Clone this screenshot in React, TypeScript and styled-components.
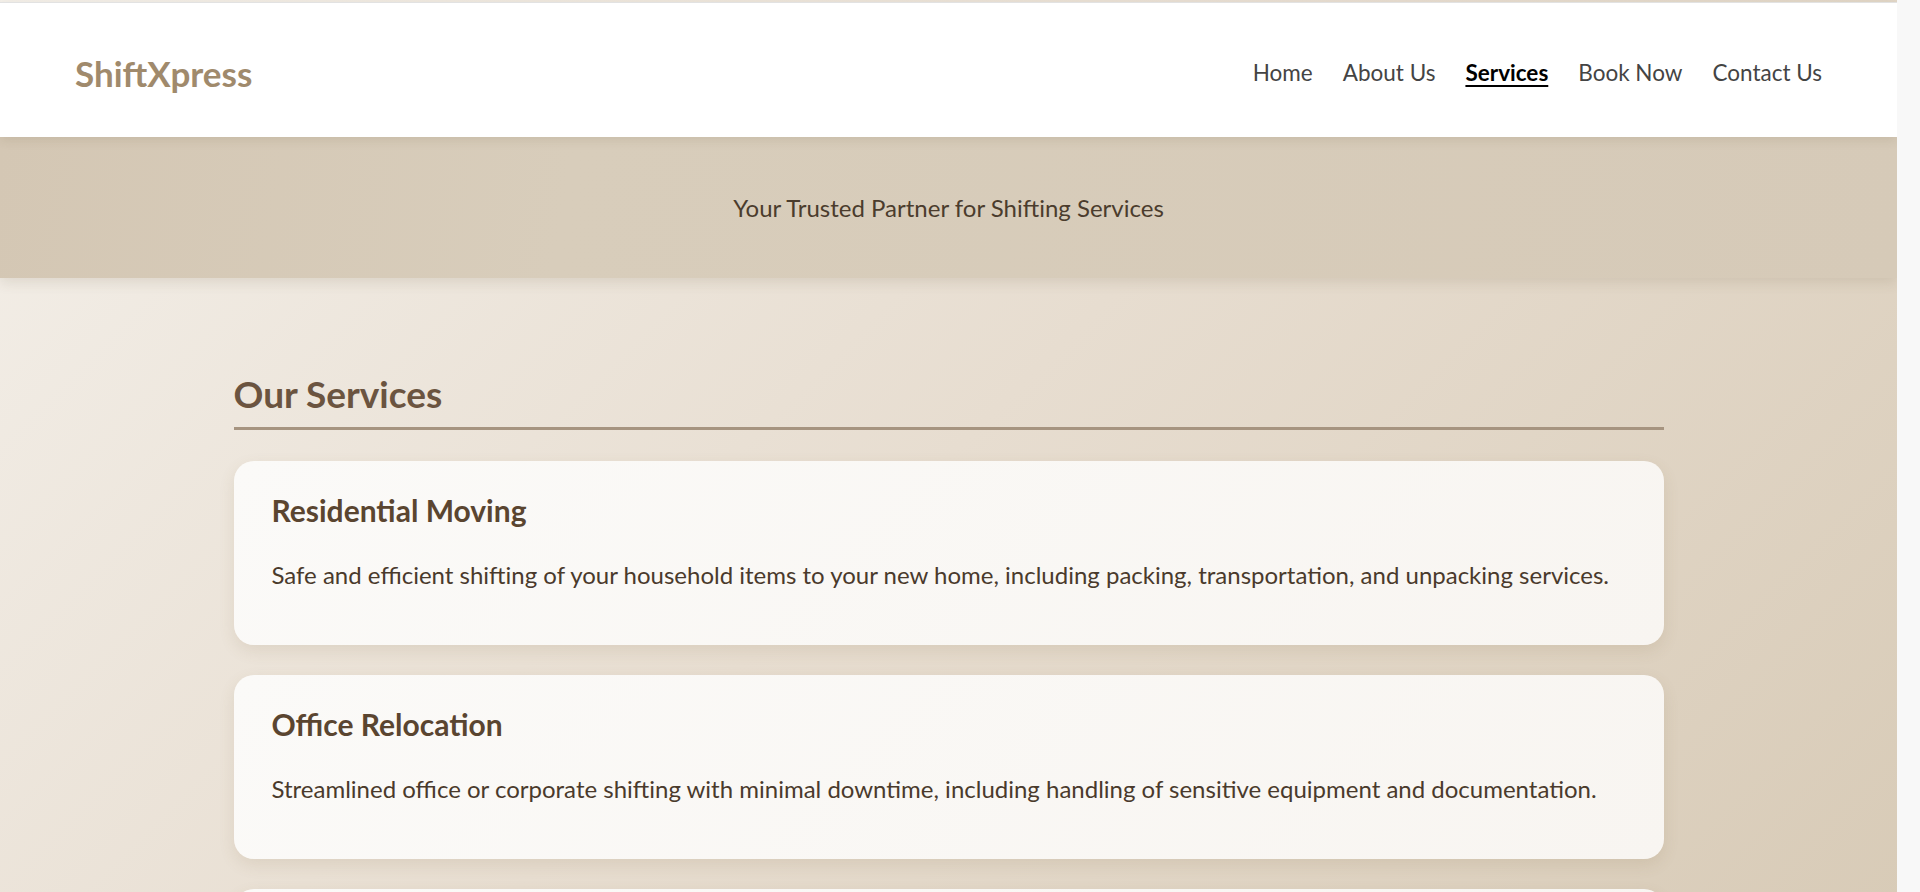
import styled, { createGlobalStyle } from "styled-components";

const GlobalStyle = createGlobalStyle`
  html {
    background: #f8f8f8;
  }
  body {
    margin: 0 23px 0 0;
    padding: 0;
    font-family: Lato, "Open Sans", sans-serif;
    background: linear-gradient(135deg, #f4f0ea 0%, #e7ddd0 50%, #d8cbb7 100%) fixed;
    color: #4a3b2c;
  }
`;

const Header = styled.header`
  position: relative;
  z-index: 2;
  display: flex;
  justify-content: space-between;
  align-items: center;
  box-sizing: border-box;
  height: 135px;
  margin-top: 2px;
  padding: 5px 75px 0;
  background: #ffffff;
  border-top: 1px solid #e2e2e2;
  box-shadow: 0 3px 10px rgba(90, 70, 40, 0.12);
`;

const Logo = styled.div`
  font-size: 35px;
  font-weight: 700;
  color: #a08a6c;
`;

const NavList = styled.ul`
  display: flex;
  gap: 30px;
  margin: 0;
  padding: 0;
  list-style: none;
`;

const NavLink = styled.a<{ $active?: boolean }>`
  font-size: 22.5px;
  text-decoration: ${({ $active }) => ($active ? "underline" : "none")};
  text-underline-offset: 4px;
  text-decoration-thickness: 2px;
  font-weight: ${({ $active }) => ($active ? 700 : 400)};
  color: ${({ $active }) => ($active ? "#000000" : "#444444")};
  cursor: pointer;
`;

const Hero = styled.section`
  position: relative;
  z-index: 1;
  display: flex;
  justify-content: center;
  align-items: center;
  height: 141px;
  background: linear-gradient(100deg, #d4c7b4 0%, #d8cdbb 30%, #d6cab8 100%);
  box-shadow: 0 5px 12px rgba(90, 70, 40, 0.12);
`;

const Tagline = styled.p`
  margin: 0;
  font-size: 24px;
  color: #4b3c2d;
`;

const Main = styled.main`
  padding: 93px 0 60px;
`;

const Container = styled.div`
  width: 1430px;
  max-width: 90%;
  margin: 0 auto;
`;

const SectionTitle = styled.h2`
  margin: 0 0 31px;
  padding-bottom: 10px;
  font-size: 37px;
  line-height: 46px;
  font-weight: 700;
  color: #6b5440;
  border-bottom: 3px solid #a69480;
`;

const Card = styled.article`
  margin-bottom: 30px;
  padding: 32px 34px 32px 38px;
  border-radius: 20px;
  background: linear-gradient(135deg, #fbfaf8 0%, #f8f5f1 100%);
  box-shadow: 0 6px 16px rgba(120, 95, 60, 0.12);
`;

const CardTitle = styled.h3`
  margin: 0 0 30px;
  font-size: 30px;
  line-height: 34px;
  font-weight: 700;
  color: #5a4530;
`;

const CardText = styled.p`
  margin: 0 0 21px;
  font-size: 24px;
  line-height: 35px;
  color: #4a3a2c;
`;

const links = ["Home", "About Us", "Services", "Book Now", "Contact Us"];

const services = [
  {
    title: "Residential Moving",
    text: "Safe and efficient shifting of your household items to your new home, including packing, transportation, and unpacking services.",
  },
  {
    title: "Office Relocation",
    text: "Streamlined office or corporate shifting with minimal downtime, including handling of sensitive equipment and documentation.",
  },
  {
    title: "Vehicle Transportation",
    text: "Secure transport of cars and bikes to your destination with enclosed carriers and full insurance coverage.",
  },
  {
    title: "Storage Solutions",
    text: "Clean and secure short-term or long-term storage facilities for your belongings during the move.",
  },
];

export default function App() {
  return (
    <>
      <GlobalStyle />
      <Header>
        <Logo>ShiftXpress</Logo>
        <nav>
          <NavList>
            {links.map((l) => (
              <li key={l}>
                <NavLink $active={l === "Services"}>{l}</NavLink>
              </li>
            ))}
          </NavList>
        </nav>
      </Header>
      <Hero>
        <Tagline>Your Trusted Partner for Shifting Services</Tagline>
      </Hero>
      <Main>
        <Container>
          <SectionTitle>Our Services</SectionTitle>
          {services.map((s) => (
            <Card key={s.title}>
              <CardTitle>{s.title}</CardTitle>
              <CardText>{s.text}</CardText>
            </Card>
          ))}
        </Container>
      </Main>
    </>
  );
}
